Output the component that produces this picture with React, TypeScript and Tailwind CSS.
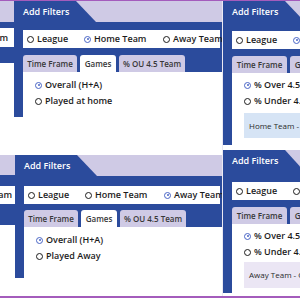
import React from "react";

function Radio({ on }: { on?: boolean }) {
  return on ? (
    <span className="w-[7px] h-[7px] rounded-full border-[1.5px] border-[#4a66c6] flex items-center justify-center shrink-0">
      <span className="w-[2px] h-[2px] rounded-full bg-[#4a66c6]" />
    </span>
  ) : (
    <span className="w-[7px] h-[7px] rounded-full border-[1.5px] border-[#1c1c1c] shrink-0" />
  );
}

type WidgetProps = {
  sel: number;
  headCls: string;
  bandCls: string;
  band2Cls: string;
  contentCls: string;
  options: string[];
  tabs: { label: string; w: string; active?: boolean }[];
  box?: { text: string; cls: string };
  widthCls: string;
};

function Widget({ sel, headCls, bandCls, band2Cls, contentCls, options, tabs, box, widthCls }: WidgetProps) {
  const labels = [
    { t: "League", w: "w-[57px]" },
    { t: "Home Team", w: "w-[79px]" },
    { t: "Away Team", w: "w-auto" },
  ];
  return (
    <div className={`${widthCls} shrink-0 flex flex-col`}>
      <div className={`flex bg-[#cfcae5] ${headCls}`}>
        <div className="w-[82px] bg-[#2b4b9c] [clip-path:polygon(0_0,62px_0,100%_100%,0_100%)] flex items-center pl-[9px] text-white text-[9px] font-semibold whitespace-nowrap">
          Add Filters
        </div>
      </div>
      <div className="flex">
        <div className="w-[9px] bg-[#2b4b9c] shrink-0" />
        <div className="flex-1 flex flex-col min-w-0">
          <div className={`bg-[#2b4b9c] ${bandCls}`} />
          <div className="bg-[#2b4b9c] pr-[2px]">
            <div className="h-[18px] bg-white flex items-center pl-[4px] text-[9px] font-semibold text-[#1c1c1c] whitespace-nowrap">
              {labels.map((l, i) => (
                <div key={l.t} className={`${l.w} flex items-center gap-[3px] shrink-0`}>
                  <Radio on={sel === i} />
                  <span>{l.t}</span>
                </div>
              ))}
            </div>
          </div>
          <div className={`bg-[#2b4b9c] ${band2Cls}`} />
          <div className="bg-[#2b4b9c] h-[17px] flex gap-[3px]">
            {tabs.map((t) => (
              <div
                key={t.label}
                className={`${t.w} shrink-0 rounded-t-[3px] flex items-center justify-center text-[8px] font-semibold text-[#383838] whitespace-nowrap overflow-hidden ${
                  t.active ? "bg-white" : "bg-[#cfcae5]"
                }`}
              >
                {t.label}
              </div>
            ))}
          </div>
          <div className={`bg-white pl-[12px] flex flex-col ${contentCls}`}>
            {options.map((o, i) => (
              <div key={o} className="h-[16px] flex items-center gap-[3px] text-[9px] font-semibold text-[#1c1c1c] whitespace-nowrap">
                <Radio on={i === 0} />
                <span>{o}</span>
              </div>
            ))}
            {box && (
              <div className={`${box.cls} flex items-center pl-[5px] text-[8px] font-medium text-[#2a2a2a] whitespace-nowrap`}>
                {box.text}
              </div>
            )}
          </div>
        </div>
      </div>
    </div>
  );
}

const leftTabs = [
  { label: "Time Frame", w: "w-[54px]" },
  { label: "Games", w: "w-[36px]", active: true },
  { label: "% OU 4.5 Team", w: "w-[66px]" },
];
const rightTabs = [
  { label: "Time Frame", w: "w-[55px]" },
  { label: "Games", w: "w-[36px]" },
  { label: "% OU 4.5 Team", w: "w-[66px]" },
];

export default function App() {
  return (
    <div className="w-[300px] h-[300px] overflow-hidden bg-white flex flex-col" style={{ fontFamily: '"Open Sans", "Liberation Sans", sans-serif' }}>
      <div className="h-[1px] bg-[#a45cbc] shrink-0" />
      <div className="h-[149px] flex shrink-0">
        <div className="w-[222px] overflow-hidden flex shrink-0">
          <div className="w-[14px] shrink-0 flex flex-col">
            <div className="h-[21px] bg-[#cfcae5]" />
            <div className="h-[6px] bg-[#2b4b9c]" />
            <div className="h-[19px] bg-white overflow-hidden flex justify-end items-center pr-[6px] text-[9px] font-semibold text-[#1c1c1c]">
              <span className="shrink-0 whitespace-nowrap">Away Team</span>
            </div>
            <div className="h-[16px] bg-[#2b4b9c]" />
          </div>
          <Widget
            widthCls="w-[208px]"
            sel={1}
            headCls="h-[21px]"
            bandCls="h-[8px]"
            band2Cls="h-[7px]"
            contentCls="pt-[5px] h-[45px]"
            options={["Overall (H+A)", "Played at home"]}
            tabs={leftTabs}
          />
        </div>
        <div className="flex-1 overflow-hidden flex border-l border-[#ebe9f2]">
          <Widget
            widthCls="w-[215px]"
            sel={1}
            headCls="h-[21px]"
            bandCls="h-[9px]"
            band2Cls="h-[7px]"
            contentCls="pt-[4px] pb-[7px]"
            options={["% Over 4.5", "% Under 4.5"]}
            tabs={rightTabs}
            box={{ text: "Home Team - Overall", cls: "mt-[4px] h-[25px] bg-[#d6e4f5]" }}
          />
        </div>
      </div>
      <div className="h-[146px] flex shrink-0">
        <div className="w-[222px] overflow-hidden flex shrink-0 pt-[5px]">
          <div className="w-[15px] shrink-0 flex flex-col">
            <div className="h-[20px] bg-[#cfcae5]" />
            <div className="h-[11px] bg-[#2b4b9c]" />
            <div className="h-[18px] bg-white overflow-hidden flex justify-end items-center pr-[3px] text-[9px] font-semibold text-[#1c1c1c]">
              <span className="shrink-0 whitespace-nowrap">Away Team</span>
            </div>
            <div className="h-[21px] bg-[#2b4b9c]" />
          </div>
          <Widget
            widthCls="w-[207px]"
            sel={2}
            headCls="h-[21px]"
            bandCls="h-[10px]"
            band2Cls="h-[6px]"
            contentCls="pt-[5px] h-[51px]"
            options={["Overall (H+A)", "Played Away"]}
            tabs={leftTabs}
          />
        </div>
        <div className="flex-1 overflow-hidden flex border-l border-[#ebe9f2]">
          <Widget
            widthCls="w-[215px]"
            sel={2}
            headCls="h-[22px]"
            bandCls="h-[10px]"
            band2Cls="h-[7px]"
            contentCls="pt-[4px] pb-[5px]"
            options={["% Over 4.5", "% Under 4.5"]}
            tabs={rightTabs}
            box={{ text: "Away Team - Overall", cls: "mt-[2px] h-[26px] bg-[#ebe6f4]" }}
          />
        </div>
      </div>
      <div className="h-[2px] bg-[#a45cbc] shrink-0" />
    </div>
  );
}
